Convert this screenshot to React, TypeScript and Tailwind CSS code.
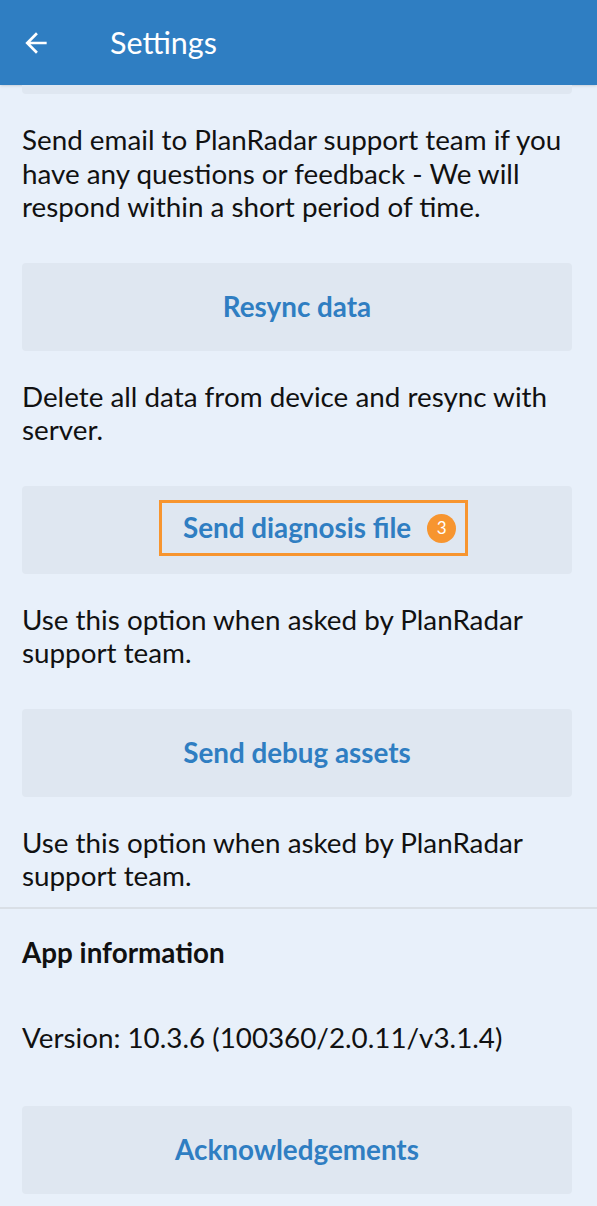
function ActionButton({ label, badge }: { label: string; badge?: number }) {
  return (
    <div className="ml-[22px] mr-[25px] h-[88px] rounded-[4px] bg-[#dfe7f1] flex items-center justify-center">
      {badge ? (
        <div className="border-[3px] border-[#f7952f] h-[56px] w-[309px] ml-[33px] flex items-center gap-[16px] pl-[21px] mt-[-3px]">
          <span className="text-[27.8px] font-bold text-[#2f7ec2]">{label}</span>
          <span className="w-[29px] h-[29px] rounded-full bg-[#f7952f] text-white text-[17px] flex items-center justify-center">
            {badge}
          </span>
        </div>
      ) : (
        <span className="text-[27.8px] font-bold text-[#2f7ec2]">{label}</span>
      )}
    </div>
  )
}

function Note({ children, last }: { children: React.ReactNode; last?: boolean }) {
  return (
    <p className={`ml-[22px] mr-[25px] mt-[29px] text-[27.8px] leading-[33.5px] text-[#111] ${last ? '' : 'mb-[39px]'}`}>
      {children}
    </p>
  )
}

export default function App() {
  return (
    <div className="w-[597px] h-[1206px] overflow-hidden bg-[#e8f0fa]" style={{ fontFamily: 'Lato, "Open Sans", sans-serif' }}>
      <header className="h-[85px] bg-[#2f7ec2] flex items-center text-white shadow-sm">
        <svg viewBox="0 0 24 24" width="32" height="32" className="ml-[20px] fill-white">
          <path d="M20 11H7.83l5.59-5.59L12 4l-8 8 8 8 1.41-1.41L7.83 13H20v-2z" />
        </svg>
        <h1 className="ml-[58px] text-[30.5px]">Settings</h1>
      </header>

      <div className="ml-[22px] mr-[25px] h-[9px] rounded-b-[4px] bg-[#dfe7f1]" />

      <Note>
        Send email to PlanRadar support team if you have any questions or feedback - We will respond within a short
        period of time.
      </Note>
      <ActionButton label="Resync data" />
      <Note>Delete all data from device and resync with server.</Note>
      <ActionButton label="Send diagnosis file" badge={3} />
      <Note>Use this option when asked by PlanRadar support team.</Note>
      <ActionButton label="Send debug assets" />
      <Note last>Use this option when asked by PlanRadar support team.</Note>

      <div className="mt-[14px] h-[2px] bg-[#d9dfe6]" />

      <h2 className="ml-[22px] mt-[27px] text-[27.8px] font-bold text-[#111] leading-[33.5px]">App information</h2>
      <p className="ml-[22px] mt-[52px] text-[27.8px] leading-[33.5px] text-[#111]">
        Version: 10.3.6 (100360/2.0.11/v3.1.4)
      </p>

      <div className="mt-[51px]">
        <ActionButton label="Acknowledgements" />
      </div>
    </div>
  )
}
